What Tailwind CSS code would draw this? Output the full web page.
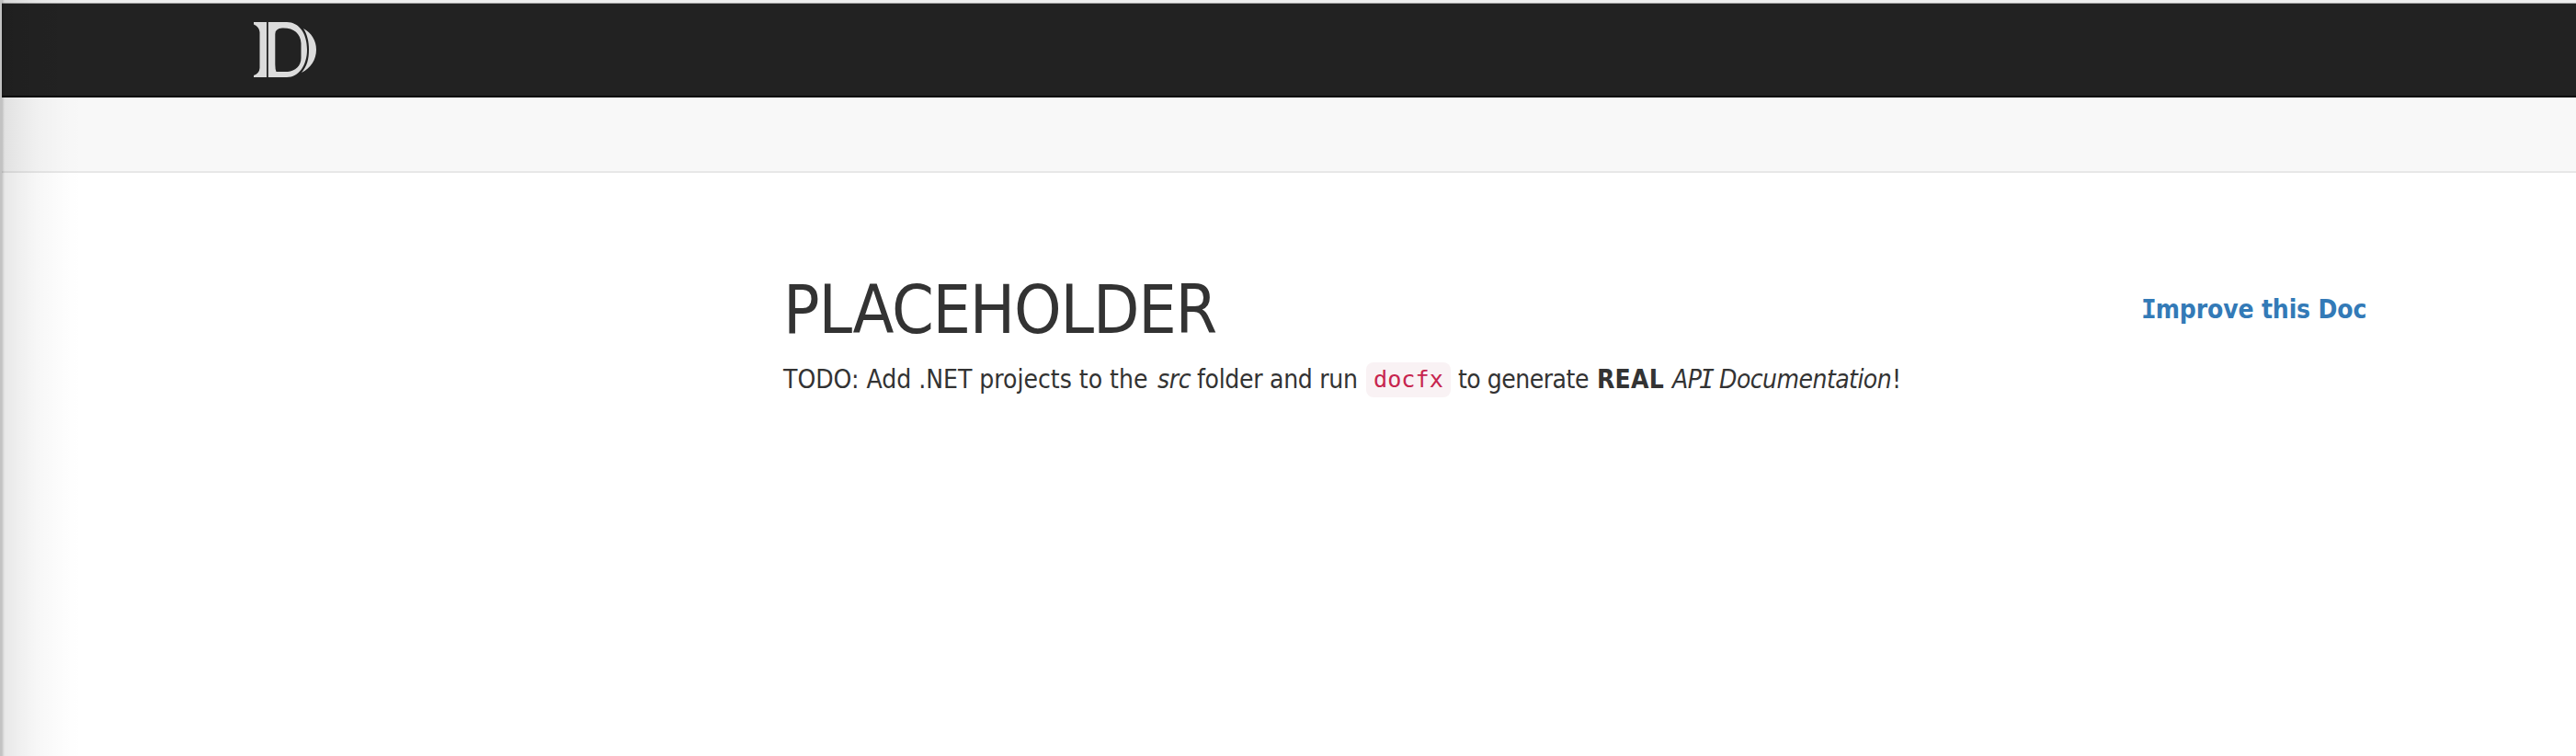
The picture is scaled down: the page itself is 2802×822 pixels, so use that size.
<!DOCTYPE html>
<html lang="en">
<head>
<meta charset="utf-8">
<title>PLACEHOLDER</title>
<script src="https://cdn.jsdelivr.net/npm/@tailwindcss/browser@4"></script>
</head>
<body class="relative h-[822px] overflow-hidden bg-white font-['DejaVu_Sans_Condensed','DejaVu_Sans',sans-serif] [font-stretch:condensed] text-[#333]">
  <div class="h-[4px] border-b border-[#a0a0a0] bg-[#eee]"></div>
  <header class="h-[102px] border-b-2 border-[#080808] bg-[#222] pl-[275px] pt-[19px]">
    <svg class="h-[62px] w-[70px]" viewBox="0 0 70 62" fill="#dcdcdc">
      <path d="M1 1H15V61H1V59Q7 57 7.500 51V12Q7 6 1 3.500Z"/>
      <path fill-rule="evenodd" d="M16.800 1H37C50 1 59 13 59 31C59 48 50 61 37 61H16.800ZM32 7.500Q24.300 8 24.300 14V47Q24.300 52 25.500 55H38C46 54 52.500 49 52.500 40V24C52 13 44 7 32 7.500Z"/>
      <path d="M55 8C64 13 69 21 69 31C69 42 63 51 53 56C59 49 61 41 61 31C61 22 59 14 55 8Z"/>
    </svg>
  </header>
  <div class="h-[82px] border-b-2 border-[#e7e7e7] bg-[#f8f8f8]"></div>
  <main class="flex pl-[852px] pt-[98px]">
    <article class="w-[1478px]">
      <h1 class="h-[100px] whitespace-nowrap pt-px text-[73px] leading-[100px] tracking-[-1.2px]">PLACEHOLDER</h1>
      <p class="mt-[5px] flex h-[40px] items-center whitespace-nowrap pt-[3px] text-[28px] leading-[40px]">
        <span class="w-[407px]">TODO: Add .NET projects to the</span>
        <em class="w-[43px] tracking-[-0.4px]">src</em>
        <span class="w-[184px] tracking-[-0.3px]">folder and run</span>
        <code class="h-[38px] w-[92px] rounded-[8px] bg-[#f9f2f4] px-[8px] font-['DejaVu_Sans_Mono',monospace] text-[25.2px] leading-[38px] text-[#c7254e]">docfx</code>
        <span class="ml-[8px] w-[151px] tracking-[-0.5px]">to generate</span>
        <strong class="w-[82px] tracking-[0.2px]">REAL</strong>
        <em class="w-[241px] tracking-[-0.55px]">AP<span class="-ml-[2px] -mr-[2px] font-['DejaVu_Sans_Mono',monospace]">I</span> Documentation</em>
        <span class="-ml-[2px]">!</span>
      </p>
    </article>
    <a class="mt-[31px] whitespace-nowrap text-[28px] font-bold leading-[40px] tracking-[-0.15px] text-[#337ab7]"><span class="-ml-px -mr-[1px] font-['DejaVu_Sans_Mono',monospace]">I</span>mprove this Doc</a>
  </main>
  <div class="absolute inset-y-0 left-0 w-[90px] bg-[linear-gradient(to_right,rgba(0,0,0,0.1),rgba(0,0,0,0.065)_20%,rgba(0,0,0,0.03)_45%,rgba(0,0,0,0.008)_78%,transparent)]"></div>
  <div class="absolute inset-y-0 left-0 w-[2px] bg-[#c2c2c2]"></div>
  <div class="absolute inset-y-0 left-[2px] w-[3px] bg-linear-to-r from-black/15 to-transparent"></div>
</body>
</html>
